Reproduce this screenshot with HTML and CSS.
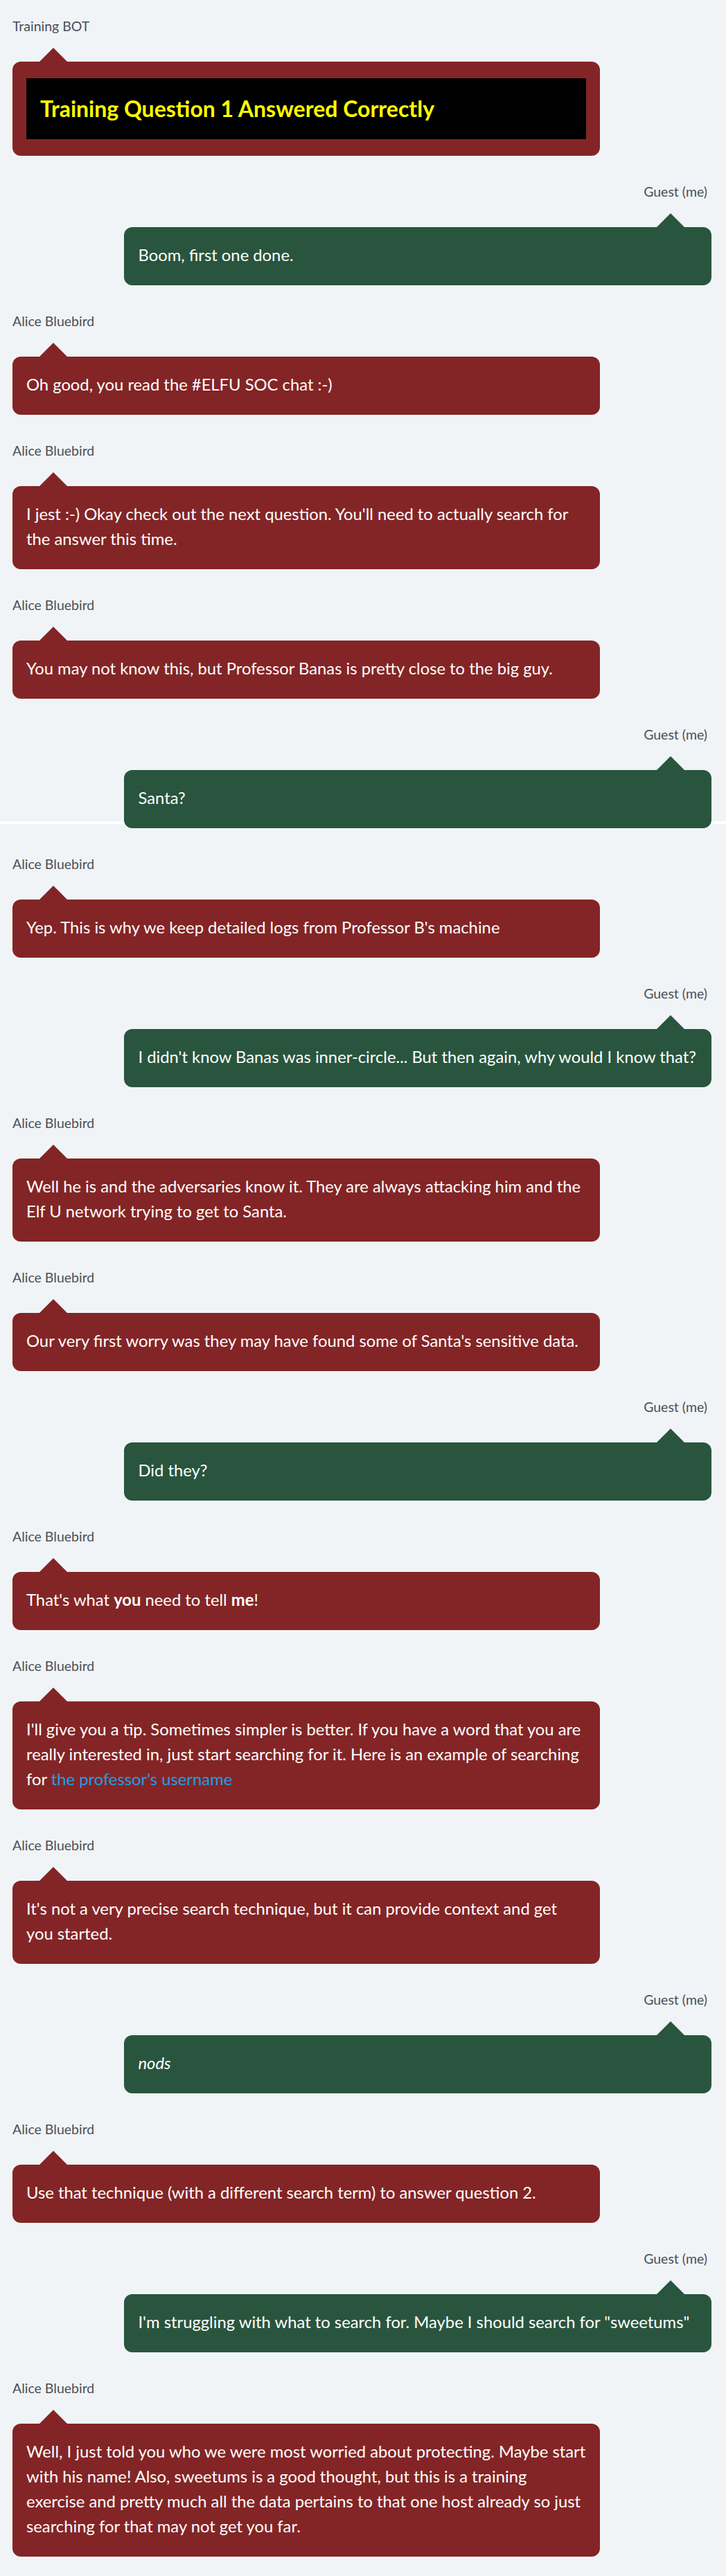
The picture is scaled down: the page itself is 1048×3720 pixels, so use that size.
FILE: index.html
```html
<!DOCTYPE html>
<html lang="en">
<head>
<meta charset="utf-8">
<title>Training chat</title>
<link rel="stylesheet" href="styles.css">
</head>
<body>
<div class="chat">
  <div class="msg msg-left">
    <div class="sender">Training BOT</div>
    <div class="bubble">
      <div class="notice"><h3 class="notice-title">Training Question 1 Answered Correctly</h3></div>
    </div>
  </div>

  <div class="msg msg-right">
    <div class="sender">Guest (me)</div>
    <div class="bubble">Boom, first one done.</div>
  </div>

  <div class="msg msg-left">
    <div class="sender">Alice Bluebird</div>
    <div class="bubble">Oh good, you read the #ELFU SOC chat :-)</div>
  </div>

  <div class="msg msg-left">
    <div class="sender">Alice Bluebird</div>
    <div class="bubble">I jest :-) Okay check out the next question. You'll need to actually search for<br>the answer this time.</div>
  </div>

  <div class="msg msg-left">
    <div class="sender">Alice Bluebird</div>
    <div class="bubble">You may not know this, but Professor Banas is pretty close to the big guy.</div>
  </div>

  <div class="msg msg-right">
    <div class="sender">Guest (me)</div>
    <div class="bubble">Santa?</div>
  </div>

  <div class="msg msg-left">
    <div class="sender">Alice Bluebird</div>
    <div class="bubble">Yep. This is why we keep detailed logs from Professor B's machine</div>
  </div>

  <div class="msg msg-right">
    <div class="sender">Guest (me)</div>
    <div class="bubble">I didn't know Banas was inner-circle... But then again, why would I know that?</div>
  </div>

  <div class="msg msg-left">
    <div class="sender">Alice Bluebird</div>
    <div class="bubble">Well he is and the adversaries know it. They are always attacking him and the<br>Elf U network trying to get to Santa.</div>
  </div>

  <div class="msg msg-left">
    <div class="sender">Alice Bluebird</div>
    <div class="bubble">Our very first worry was they may have found some of Santa's sensitive data.</div>
  </div>

  <div class="msg msg-right">
    <div class="sender">Guest (me)</div>
    <div class="bubble">Did they?</div>
  </div>

  <div class="msg msg-left">
    <div class="sender">Alice Bluebird</div>
    <div class="bubble">That's what <strong>you</strong> need to tell <strong>me</strong>!</div>
  </div>

  <div class="msg msg-left">
    <div class="sender">Alice Bluebird</div>
    <div class="bubble">I'll give you a tip. Sometimes simpler is better. If you have a word that you are<br>really interested in, just start searching for it. Here is an example of searching<br>for <a class="link" href="#">the professor's username</a></div>
  </div>

  <div class="msg msg-left">
    <div class="sender">Alice Bluebird</div>
    <div class="bubble">It's not a very precise search technique, but it can provide context and get<br>you started.</div>
  </div>

  <div class="msg msg-right">
    <div class="sender">Guest (me)</div>
    <div class="bubble"><em>nods</em></div>
  </div>

  <div class="msg msg-left">
    <div class="sender">Alice Bluebird</div>
    <div class="bubble">Use that technique (with a different search term) to answer question 2.</div>
  </div>

  <div class="msg msg-right">
    <div class="sender">Guest (me)</div>
    <div class="bubble">I'm struggling with what to search for. Maybe I should search for "sweetums"</div>
  </div>

  <div class="msg msg-left">
    <div class="sender">Alice Bluebird</div>
    <div class="bubble">Well, I just told you who we were most worried about protecting. Maybe start<br>with his name! Also, sweetums is a good thought, but this is a training<br>exercise and pretty much all the data pertains to that one host already so just<br>searching for that may not get you far.</div>
  </div>
</div>
</body>
</html>
```

FILE: styles.css
```css
* { box-sizing: border-box; }

html, body {
  margin: 0;
  padding: 0;
}

body {
  font-family: "Lato", "Liberation Sans", sans-serif;
  background: linear-gradient(to bottom,
    #f0f4f7 0, #f0f4f7 1186px,
    #ffffff 1186px, #ffffff 1190px,
    #f0f4f7 1190px);
  background-color: #f0f4f7;
}

.chat {
  display: flex;
  flex-direction: column;
  gap: 40px;
  padding: 26px 21px 28px 18px;
}

.msg {
  display: flex;
  flex-direction: column;
}

.msg-left { align-items: flex-start; }
.msg-right { align-items: flex-end; }

.sender {
  font-size: 19.5px;
  line-height: 24px;
  color: #4b4f58;
}

.msg-right .sender { padding-right: 6px; }

.bubble {
  position: relative;
  width: 84%;
  margin-top: 39px;
  padding: 22px 20px 26px;
  border-radius: 12px;
  font-size: 23.8px;
  line-height: 36px;
  color: #ffffff;
}

.bubble::before {
  content: "";
  position: absolute;
  top: -20px;
  width: 0;
  height: 0;
  border-left: 20px solid transparent;
  border-right: 20px solid transparent;
  border-bottom: 20px solid transparent;
}

.msg-left .bubble {
  background: #832526;
}
.msg-left .bubble::before {
  left: 39px;
  border-bottom-color: #832526;
}

.msg-right .bubble {
  background: #29553e;
}
.msg-right .bubble::before {
  right: 39px;
  border-bottom-color: #29553e;
}

.notice {
  background: #000000;
  padding: 26px 20px 26px;
  margin: 2px 0 -2px;
}

.notice-title {
  margin: 0;
  font-size: 32px;
  line-height: 36px;
  font-weight: 700;
  color: #ffff00;
}

.link {
  color: #1f9de6;
  text-decoration: none;
}
```
